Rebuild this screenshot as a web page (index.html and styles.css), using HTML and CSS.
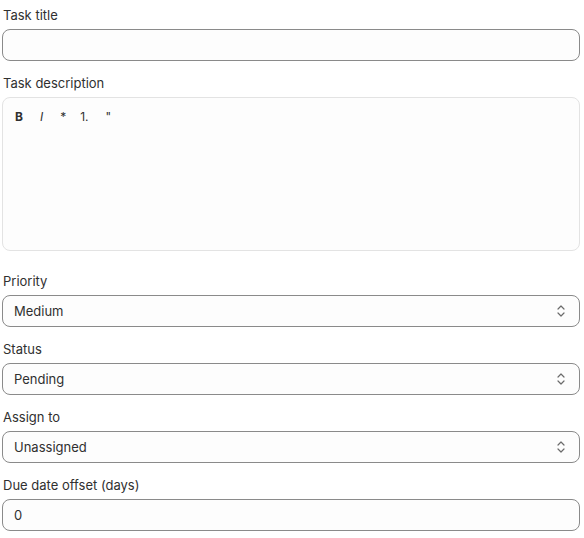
FILE: index.html
```
<!DOCTYPE html>
<html>
<head>
<meta charset="utf-8">
<link rel="stylesheet" href="styles.css">
</head>
<body>
<form class="form">
  <div class="field">
    <label class="label">Task title</label>
    <div class="input"></div>
  </div>
  <div class="field field-desc">
    <label class="label">Task description</label>
    <div class="editor">
      <div class="toolbar">
        <span class="tb tb-b">B</span>
        <span class="tb tb-i">I</span>
        <span class="tb tb-star">*</span>
        <span class="tb tb-num">1.</span>
        <span class="tb tb-q">"</span>
      </div>
    </div>
  </div>
  <div class="field">
    <label class="label">Priority</label>
    <div class="input select">
      <span>Medium</span>
      <svg class="chev" width="10" height="14" viewBox="0 0 10 14"><path d="M2 5 L5 2 L8 5 M2 9 L5 12 L8 9" fill="none" stroke="#6b6b6b" stroke-width="1.2" stroke-linecap="round" stroke-linejoin="round"/></svg>
    </div>
  </div>
  <div class="field">
    <label class="label">Status</label>
    <div class="input select">
      <span>Pending</span>
      <svg class="chev" width="10" height="14" viewBox="0 0 10 14"><path d="M2 5 L5 2 L8 5 M2 9 L5 12 L8 9" fill="none" stroke="#6b6b6b" stroke-width="1.2" stroke-linecap="round" stroke-linejoin="round"/></svg>
    </div>
  </div>
  <div class="field">
    <label class="label">Assign to</label>
    <div class="input select">
      <span>Unassigned</span>
      <svg class="chev" width="10" height="14" viewBox="0 0 10 14"><path d="M2 5 L5 2 L8 5 M2 9 L5 12 L8 9" fill="none" stroke="#6b6b6b" stroke-width="1.2" stroke-linecap="round" stroke-linejoin="round"/></svg>
    </div>
  </div>
  <div class="field">
    <label class="label">Due date offset (days)</label>
    <div class="input"><span>0</span></div>
  </div>
</form>
</body>
</html>
```
FILE: styles.css
```
html, body {
  margin: 0;
  padding: 0;
  background: #ffffff;
}
body {
  font-family: Inter, "Liberation Sans", sans-serif;
  font-size: 13px;
  color: #303030;
}
.form {
  display: flex;
  flex-direction: column;
  gap: 12px;
  padding: 5px 4px 0 2px;
}
.field {
  display: flex;
  flex-direction: column;
  gap: 4px;
}
.field-desc {
  margin-bottom: 8px;
}
.label {
  display: block;
  line-height: 20px;
  padding-left: 1px;
  color: #303030;
}
.input {
  box-sizing: border-box;
  height: 32px;
  border: 1px solid #8a8a8a;
  border-radius: 8px;
  background: #fdfdfd;
  display: flex;
  align-items: center;
  padding: 0 12px 0 11px;
  line-height: 20px;
}
.select {
  justify-content: space-between;
}
.chev {
  display: block;
  margin-right: 1px;
}
.editor {
  box-sizing: border-box;
  height: 154px;
  border: 1px solid #e3e3e3;
  border-radius: 8px;
  background: #fdfdfd;
  padding: 8px 12px;
}
.toolbar {
  display: flex;
  align-items: center;
  height: 20px;
  font-size: 12px;
  color: #303030;
}
.tb {
  display: inline-block;
}
.tb-b {
  font-weight: 700;
  margin-left: 0;
}
.tb-i {
  font-style: italic;
  margin-left: 17px;
}
.tb-star {
  margin-left: 17px;
}
.tb-num {
  margin-left: 14px;
}
.tb-q {
  margin-left: 17px;
}
```
